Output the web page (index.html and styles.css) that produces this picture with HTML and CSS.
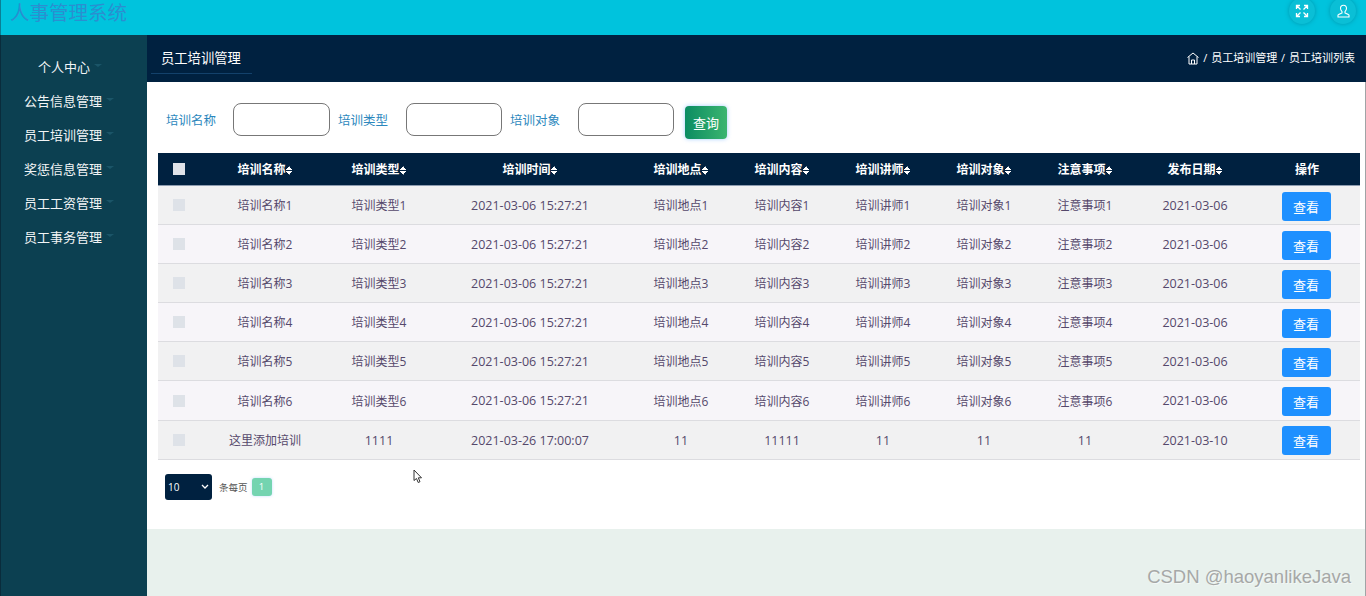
FILE: index.html
```html
<!DOCTYPE html>
<html lang="zh">
<head>
  <meta charset="UTF-8" />
  <title>人事管理系统</title>
  <link rel="stylesheet" href="styles.css">
</head>
<body>
  <header class="topbar">
    <div class="brand">人事管理系统</div>
    <div class="top-actions">
      <span class="round-btn">
        <svg width="14" height="14" viewBox="0 0 14 14" fill="none" stroke="#fff" stroke-width="1.3">
          <path d="M1.5 5V1.5H5M9 1.5h3.5V5M12.5 9v3.5H9M5 12.5H1.5V9M2 2l3.5 3.5M12 2L8.500 5.500M12 12L8.500 8.500M2 12l3.500-3.500"/>
        </svg>
      </span>
      <span class="round-btn">
        <svg width="15" height="15" viewBox="0 0 15 15" fill="none" stroke="#fff" stroke-width="1.1">
          <path d="M7.500 1.200c-2 0-3 1.400-3 3.100 0 1.500.7 2.600 1.500 3.300v1.300c-1.500.6-3.300 1.200-4 2.100v2h11v-2c-.7-.9-2.500-1.500-4-2.100V7.600c.8-.7 1.500-1.800 1.500-3.300 0-1.700-1-3.100-3-3.100z"/>
        </svg>
      </span>
    </div>
  </header>

  <div class="layout">
    <nav class="sidebar">
      <a class="nav-item nav-first">个人中心<i class="caret"></i></a>
      <a class="nav-item">公告信息管理<i class="caret"></i></a>
      <a class="nav-item">员工培训管理<i class="caret"></i></a>
      <a class="nav-item">奖惩信息管理<i class="caret"></i></a>
      <a class="nav-item">员工工资管理<i class="caret"></i></a>
      <a class="nav-item">员工事务管理<i class="caret"></i></a>
    </nav>

    <main class="content">
      <div class="subbar">
        <h2 class="subbar-title">员工培训管理</h2>
        <div class="crumbs">
          <svg width="12" height="13" viewBox="0 0 12 13" fill="none" stroke="#fff" stroke-width="1">
            <path d="M.5 5.500L6 1l5.500 4.500M2 4.500V12h8V4.500M4.500 12V8h3v4"/>
          </svg>
          <span>/ 员工培训管理 / 员工培训列表</span>
        </div>
      </div>

      <section class="panel">
        <form class="search">
          <label class="search-label">培训名称</label>
          <input class="search-input" type="text" />
          <label class="search-label">培训类型</label>
          <input class="search-input" type="text" />
          <label class="search-label">培训对象</label>
          <input class="search-input" type="text" />
          <button class="search-btn" type="button">查询</button>
        </form>

        <table class="grid">
          <colgroup>
            <col class="c-check"><col class="c-wide"><col class="c-std"><col class="c-time"><col class="c-std"><col class="c-mid"><col class="c-std"><col class="c-mid"><col class="c-std"><col class="c-date"><col class="c-mid">
          </colgroup>
          <thead>
            <tr>
              <th><span class="check check-head"></span></th>
              <th>培训名称<i class="sort"></i></th>
              <th>培训类型<i class="sort"></i></th>
              <th>培训时间<i class="sort"></i></th>
              <th>培训地点<i class="sort"></i></th>
              <th>培训内容<i class="sort"></i></th>
              <th>培训讲师<i class="sort"></i></th>
              <th>培训对象<i class="sort"></i></th>
              <th>注意事项<i class="sort"></i></th>
              <th>发布日期<i class="sort"></i></th>
              <th>操作</th>
            </tr>
          </thead>
          <tbody>
            <tr><td><span class="check"></span></td><td>培训名称1</td><td>培训类型1</td><td>2021-03-06 15:27:21</td><td>培训地点1</td><td>培训内容1</td><td>培训讲师1</td><td>培训对象1</td><td>注意事项1</td><td>2021-03-06</td><td><button class="view-btn">查看</button></td></tr>
            <tr><td><span class="check"></span></td><td>培训名称2</td><td>培训类型2</td><td>2021-03-06 15:27:21</td><td>培训地点2</td><td>培训内容2</td><td>培训讲师2</td><td>培训对象2</td><td>注意事项2</td><td>2021-03-06</td><td><button class="view-btn">查看</button></td></tr>
            <tr><td><span class="check"></span></td><td>培训名称3</td><td>培训类型3</td><td>2021-03-06 15:27:21</td><td>培训地点3</td><td>培训内容3</td><td>培训讲师3</td><td>培训对象3</td><td>注意事项3</td><td>2021-03-06</td><td><button class="view-btn">查看</button></td></tr>
            <tr><td><span class="check"></span></td><td>培训名称4</td><td>培训类型4</td><td>2021-03-06 15:27:21</td><td>培训地点4</td><td>培训内容4</td><td>培训讲师4</td><td>培训对象4</td><td>注意事项4</td><td>2021-03-06</td><td><button class="view-btn">查看</button></td></tr>
            <tr><td><span class="check"></span></td><td>培训名称5</td><td>培训类型5</td><td>2021-03-06 15:27:21</td><td>培训地点5</td><td>培训内容5</td><td>培训讲师5</td><td>培训对象5</td><td>注意事项5</td><td>2021-03-06</td><td><button class="view-btn">查看</button></td></tr>
            <tr class="row-tall"><td><span class="check"></span></td><td>培训名称6</td><td>培训类型6</td><td>2021-03-06 15:27:21</td><td>培训地点6</td><td>培训内容6</td><td>培训讲师6</td><td>培训对象6</td><td>注意事项6</td><td>2021-03-06</td><td><button class="view-btn">查看</button></td></tr>
            <tr class="row-custom"><td><span class="check"></span></td><td>这里添加培训</td><td>1111</td><td>2021-03-26 17:00:07</td><td>11</td><td>11111</td><td>11</td><td>11</td><td>11</td><td>2021-03-10</td><td><button class="view-btn">查看</button></td></tr>
          </tbody>
        </table>

        <div class="pager">
          <div class="page-size">10
            <svg width="8" height="5" viewBox="0 0 8 5" fill="none" stroke="#fff" stroke-width="1.300"><path d="M1 1l3 3 3-3"/></svg>
          </div>
          <span class="page-text">条每页</span>
          <span class="page-num">1</span>
        </div>
      </section>

      <div class="watermark">CSDN @haoyanlikeJava</div>
    </main>
  </div>

  <svg class="cursor" width="10" height="15" viewBox="0 0 10 15" fill="#fff" stroke="#333" stroke-width="1">
    <path d="M1 1v10.500l2.500-2 1.700 4 1.800-.8-1.700-3.900H8.500z"/>
  </svg>
</body>
</html>
```

FILE: styles.css
```css
* {
  box-sizing: border-box;
}
html, body {
  height: 100%;
}
body {
  margin: 0;
  overflow: hidden;
  background-color: #e8f1ed;
  color: #55486b;
  font-family: "Open Sans", "Noto Sans CJK SC", sans-serif;
  font-size: 13px;
  position: relative;
}
.topbar {
  height: 35px;
  background-color: #00c3dd;
  display: flex;
  justify-content: space-between;
  border-left: 1px solid #0a7f95;
  overflow: hidden;
}
.brand {
  font-family: "Liberation Sans", "Noto Sans CJK SC", sans-serif;
  font-size: 19.500px;
  line-height: 25px;
  color: #2a8fd0;
  padding: 1px 0 0 9px;
}
.top-actions {
  display: flex;
  gap: 15px;
  padding-right: 10px;
  margin-top: -2px;
}
.round-btn {
  width: 26px;
  height: 26px;
  border-radius: 50%;
  background-color: #0abfd6;
  box-shadow: 0 0 4px rgba(0, 110, 130, 0.5);
  display: flex;
  align-items: center;
  justify-content: center;
}
.layout {
  display: flex;
  height: 561px;
}
.sidebar {
  width: 147px;
  flex: none;
  background-color: #0c4051;
  border-left: 1px solid #0a2c3c;
  padding-top: 15px;
  display: flex;
  flex-direction: column;
}
.nav-item {
  height: 34px;
  line-height: 34px;
  color: #f2f5f6;
  padding-left: 23px;
  font-size: 13px;
  display: flex;
  align-items: center;
}
.nav-first {
  padding-left: 37px;
}
.caret {
  width: 0;
  height: 0;
  margin-left: 4px;
  margin-top: -3px;
  border-left: 4px solid transparent;
  border-right: 4px solid transparent;
  border-top: 3px solid #1b5568;
}
.content {
  flex: 1;
  min-width: 0;
  border-right: 1px solid #a0a4a6;
  position: relative;
}
.subbar {
  height: 47px;
  margin-right: -1px;
  background-color: #002140;
  display: flex;
  justify-content: space-between;
  align-items: flex-start;
  color: #fff;
  padding: 0 11px 0 4px;
}
.subbar-title {
  margin: 0;
  height: 39px;
  width: 101px;
  padding: 13px 0 0 10px;
  font-size: 13.300px;
  font-weight: 400;
  line-height: 20px;
  border-bottom: 1px solid #13416b;
}
.crumbs {
  display: flex;
  align-items: center;
  gap: 4px;
  font-size: 11px;
  line-height: 16px;
  word-spacing: 1px;
  padding-top: 15px;
}
.panel {
  height: 447px;
  background-color: #fff;
  padding: 0 5px 0 11px;
}
.search {
  height: 71px;
  display: flex;
  align-items: flex-start;
}
.search-label {
  color: #2b87bd;
  font-size: 12.500px;
  line-height: 18px;
  margin-top: 30px;
  margin-left: 8px;
  width: 68px;
}
.search-label:first-child {
  width: 67px;
}
.search-input {
  width: 97px;
  height: 33px;
  margin-top: 21px;
  border: 1px solid #777;
  border-radius: 8px;
  background-color: #fff;
}
.search-input:nth-of-type(2),
.search-input:nth-of-type(3) {
  width: 96px;
}
.search-btn {
  margin: 24px 0 0 11px;
  width: 42px;
  height: 33px;
  border: none;
  border-radius: 4px;
  color: #fff;
  font-family: inherit;
  font-size: 13px;
  background: linear-gradient(90deg, #0b8c62, #3bb570);
  box-shadow: 0 0 4px rgba(100, 170, 255, 0.6);
}
.grid {
  width: 1202px;
  table-layout: fixed;
  border-collapse: collapse;
}
.c-check { width: 42px; }
.c-wide { width: 130px; }
.c-std { width: 98px; }
.c-time { width: 204px; }
.c-mid { width: 104px; }
.c-date { width: 122px; }
.grid th {
  height: 32px;
  padding: 0;
  background-color: #002140;
  color: #fff;
  font-size: 12px;
  font-weight: 700;
  text-align: center;
  border-bottom: 1px solid #8d9cb0;
}
.grid th:last-child {
  padding-right: 2px;
}
.grid td {
  height: 39px;
  padding: 1px 0 0;
  text-align: center;
  font-size: 12px;
  border-bottom: 1px solid #dcdce0;
}
.grid .row-tall td {
  height: 40px;
}
.grid td:nth-child(4),
.grid td:nth-child(10),
.row-custom td:not(:nth-child(2)) {
  font-size: 12.500px;
}
.grid tbody tr:nth-child(odd) td {
  background-color: #f1f1f2;
}
.grid tbody tr:nth-child(even) td {
  background-color: #f7f5f9;
}
.check {
  display: block;
  width: 12px;
  height: 12px;
  margin-left: 15px;
  background-color: #dee2e8;
}
.check-head {
  background-color: #dfe2e8;
}
.sort {
  display: inline-block;
  width: 7px;
  height: 9px;
  vertical-align: -1px;
  background:
    linear-gradient(to bottom right, transparent 50%, #fff 50%) 0 0 / 3.500px 4px no-repeat,
    linear-gradient(to bottom left, transparent 50%, #fff 50%) 3.500px 0 / 3.500px 4px no-repeat,
    linear-gradient(to top right, transparent 50%, #fff 50%) 0 5px / 3.500px 4px no-repeat,
    linear-gradient(to top left, transparent 50%, #fff 50%) 3.500px 5px / 3.500px 4px no-repeat;
}
.view-btn {
  width: 49px;
  height: 29px;
  border: none;
  border-radius: 3px;
  margin: 2px 4px 0 0;
  background-color: #1e90ff;
  color: #fff;
  font-family: inherit;
  font-size: 13px;
  padding: 0;
}
.row-custom .view-btn {
  margin-top: 0;
}
.pager {
  display: flex;
  align-items: center;
  margin-top: 14px;
  padding-left: 7px;
}
.page-size {
  width: 47px;
  height: 26px;
  background-color: #002140;
  border-radius: 3px;
  color: #fff;
  font-size: 10px;
  line-height: 26px;
  padding: 0 3px 0 3px;
  display: flex;
  align-items: center;
  justify-content: space-between;
}
.page-text {
  margin-left: 7px;
  font-size: 9.500px;
  color: #555;
}
.page-num {
  margin-left: 4px;
  width: 20px;
  height: 18px;
  border-radius: 3px;
  background-color: #74d4b0;
  color: #fff;
  font-size: 9.500px;
  line-height: 18px;
  text-align: center;
  box-shadow: 0 0 3px rgba(100, 170, 255, 0.4);
}
.watermark {
  position: absolute;
  right: 14px;
  bottom: 9px;
  font-family: "Liberation Sans", sans-serif;
  font-size: 18.500px;
  line-height: 20px;
  color: #a6a8a7;
  text-shadow: 1px 1px 0 #f4f8f6;
}
.cursor {
  position: absolute;
  left: 413px;
  top: 469px;
}
```
